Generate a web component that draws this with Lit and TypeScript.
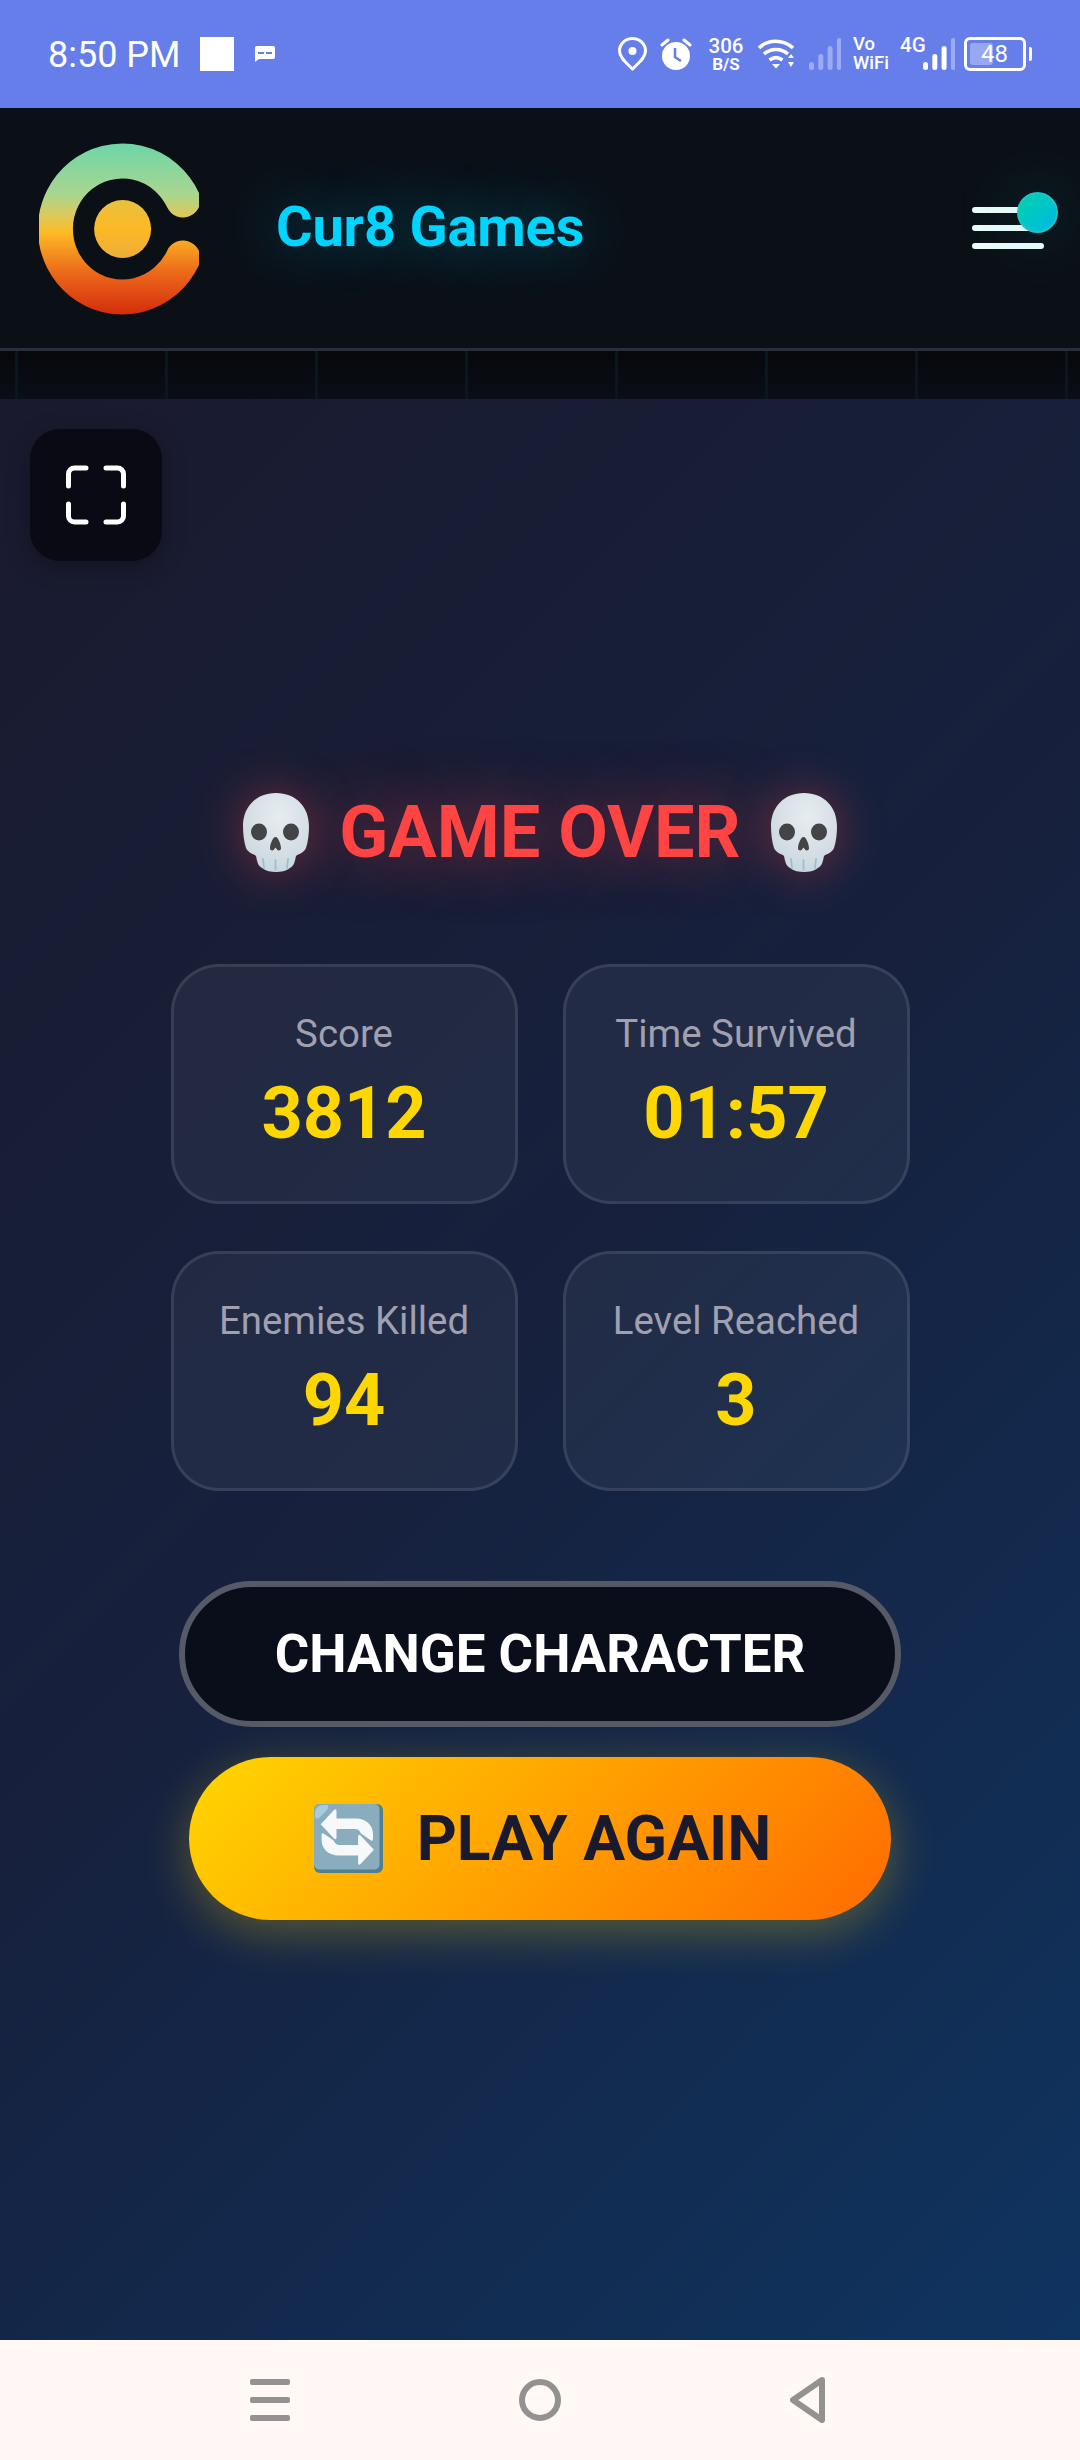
import { LitElement, html, css, svg } from 'lit';
import { customElement } from 'lit/decorators.js';

const skull = html`<svg class="skull" viewBox="0 0 66 79">
  <defs>
    <radialGradient id="sk" cx="0.55" cy="0.3" r="0.75">
      <stop offset="0" stop-color="#e6edf1" />
      <stop offset="1" stop-color="#c9d6dd" />
    </radialGradient>
  </defs>
  <path
    fill="url(#sk)"
    d="M33 0C13 0 0 14 0 33c0 8 1 16 3 22 2 5 8 6 10 8 1 5 2 10 6 12 4 3 9 4 14 4s10-1 14-4c4-2 5-7 6-12 2-2 8-3 10-8 2-6 3-14 3-22C66 14 53 0 33 0z"
  />
  <ellipse cx="16" cy="39" rx="8" ry="8.500" fill="#444" />
  <ellipse cx="48" cy="39" rx="8" ry="8.500" fill="#444" />
  <path fill="#444" d="M32.500 44c-3 0-5.500 8-5.500 11 0 3 3 3 4 1.500l1.500-2 1.500 2c1 1.500 4 1.500 4-1.500 0-3-2.500-11-5.500-11z" />
  <path stroke="#90c4dc" stroke-width="1.800" fill="none" stroke-linecap="round" d="M20 66l1 9M32.500 67v10M45 66l-1 9" />
</svg>`;

@customElement('app-root')
export class AppRoot extends LitElement {
  static styles = css`
    :host {
      display: flex;
      flex-direction: column;
      width: 1080px;
      height: 2460px;
      font-family: Roboto, 'Noto Sans', sans-serif;
      overflow: hidden;
    }

    /* android status bar */
    .status {
      flex: 0 0 108px;
      background: #667eea;
      color: #fff;
      display: flex;
      align-items: center;
      padding: 0 48px 0 48px;
      box-sizing: border-box;
    }
    .time {
      font-size: 36px;
      line-height: 1;
      margin-right: 19px;
      margin-top: 1px;
    }
    .square {
      width: 34px;
      height: 34px;
      background: #fff;
      margin-right: 21px;
    }
    .right {
      margin-left: auto;
      display: flex;
      align-items: center;
    }
    .right svg {
      display: block;
    }
    .speed {
      display: flex;
      flex-direction: column;
      align-items: center;
      font-weight: 500;
      width: 32px;
      margin: 0 16px 0 18px;
    }
    .speed b {
      font-weight: 500;
      font-size: 20.5px;
      line-height: 20px;
    }
    .speed small {
      font-size: 17px;
      line-height: 17px;
      font-weight: 700;
    }
    .vo {
      display: flex;
      flex-direction: column;
      font-weight: 500;
      margin: 0 12px;
      width: 35px;
      font-size: 18.5px;
      line-height: 19.5px;
    }
    .fourg {
      font-size: 20.5px;
      font-weight: 500;
      line-height: 20px;
      transform: translateY(-9px);
      width: 23px;
    }
    .battery {
      position: relative;
      width: 62px;
      height: 34px;
      border: 3px solid #fff;
      border-radius: 6px;
      box-sizing: border-box;
      margin-left: 9px;
      display: flex;
      align-items: center;
      justify-content: flex-end;
      padding-right: 15px;
      font-size: 24px;
    }
    .battery::before {
      content: '';
      position: absolute;
      left: 3px;
      top: 3px;
      bottom: 3px;
      width: 23px;
      background: rgba(255, 255, 255, 0.32);
      border-radius: 3px;
    }
    .battery span {
      position: relative;
    }
    .nub {
      width: 3px;
      height: 14px;
      background: #fff;
      border-radius: 0 2px 2px 0;
      margin-left: 3px;
    }

    /* site header */
    .header {
      flex: 0 0 240px;
      box-sizing: border-box;
      background: #0b1017;
      display: flex;
      align-items: center;
      padding-left: 39px;
      position: relative;
    }
    .logo {
      width: 160px;
      height: 172px;
      margin-top: 2px;
      flex: none;
    }
    .brand {
      margin-left: 77px;
      margin-top: -2px;
      font-size: 56px;
      font-weight: 700;
      color: #00d4ff;
      letter-spacing: -0.2px;
      text-shadow: 0 0 60px rgba(0, 212, 255, 0.45);
    }
    .burger {
      position: absolute;
      left: 972px;
      top: 99px;
      width: 72px;
      display: flex;
      flex-direction: column;
      gap: 12px;
    }
    .burger i {
      display: block;
      height: 6px;
      border-radius: 3px;
      background: #eafcfb;
    }
    .dot {
      position: absolute;
      left: 1017px;
      top: 84px;
      width: 41px;
      height: 41px;
      box-sizing: border-box;
      border-radius: 50%;
      border: 2px solid #22c3c8;
      background: linear-gradient(135deg, #00d4aa, #00b8e6);
      box-shadow: 0 0 60px 12px rgba(0, 212, 170, 0.1);
    }
    .rule {
      flex: 0 0 3px;
      background: #2a2e38;
    }
    .strip {
      flex: 0 0 48px;
      background-color: #080b11;
      background-image: linear-gradient(90deg, #0b161e 3px, transparent 3px), linear-gradient(#06080c, #0a0e16);
      background-size: 150px 100%, 100% 100%;
      background-position: 15px 0, 0 0;
    }

    /* game over screen */
    .main {
      flex: 1;
      background: linear-gradient(135deg, #1a1a2e 0%, #16213e 50%, #0f3460 100%);
      display: flex;
      flex-direction: column;
      align-items: center;
      padding-top: 393px;
      box-sizing: border-box;
      position: relative;
    }
    .fs {
      position: absolute;
      left: 30px;
      top: 30px;
      width: 132px;
      height: 132px;
      border-radius: 30px;
      background: #0a0a14;
      box-shadow: 0 6px 24px rgba(0, 0, 0, 0.3);
      display: flex;
      align-items: center;
      justify-content: center;
    }
    .title {
      display: flex;
      align-items: center;
      gap: 30px;
      height: 80px;
      font-size: 72px;
      font-weight: 700;
      color: #ff4444;
      white-space: nowrap;
    }
    .title span {
      text-shadow: 0 0 60px rgba(255, 68, 68, 0.5);
    }
    .skull {
      width: 66px;
      height: 79px;
      filter: drop-shadow(0 0 24px rgba(255, 68, 68, 0.4));
    }
    .stats {
      display: grid;
      grid-template-columns: 347px 347px;
      gap: 47px 45px;
      margin-top: 92px;
    }
    .card {
      height: 240px;
      box-sizing: border-box;
      border: 3px solid rgba(255, 255, 255, 0.1);
      border-radius: 48px;
      background: rgba(255, 255, 255, 0.05);
      display: flex;
      flex-direction: column;
      align-items: center;
      padding-top: 44px;
    }
    .label {
      font-size: 38.4px;
      line-height: 46px;
      color: #a0a0b0;
    }
    .value {
      font-size: 72px;
      line-height: 84px;
      font-weight: 700;
      color: #ffd700;
      margin-top: 15px;
    }
    .btn-change {
      width: 722px;
      height: 146px;
      box-sizing: border-box;
      margin-top: 90px;
      border: 6px solid #555a66;
      border-radius: 73px;
      background: #090e1a;
      color: #fff;
      font-size: 52.8px;
      font-weight: 700;
      display: flex;
      align-items: center;
      justify-content: center;
    }
    .btn-play {
      width: 702px;
      height: 163px;
      box-sizing: border-box;
      padding-left: 5px;
      margin-top: 30px;
      border-radius: 82px;
      background: linear-gradient(135deg, #ffd700, #ff6b00);
      box-shadow: 0 12px 48px rgba(255, 215, 0, 0.3);
      color: #1a1a2e;
      font-size: 62.4px;
      font-weight: 700;
      display: flex;
      align-items: center;
      justify-content: center;
      gap: 34px;
    }

    /* android nav bar */
    .nav {
      flex: 0 0 120px;
      background: #fff8f4;
      display: flex;
      align-items: center;
      padding-left: 250px;
      box-sizing: border-box;
    }
    .nav svg {
      display: block;
    }
  `;

  private renderStats() {
    const stats = [
      ['Score', '3812'],
      ['Time Survived', '01:57'],
      ['Enemies Killed', '94'],
      ['Level Reached', '3'],
    ];
    return stats.map(
      ([label, value]) => html`<div class="card">
        <div class="label">${label}</div>
        <div class="value">${value}</div>
      </div>`
    );
  }

  private bars(active: number) {
    const out = [];
    for (let i = 0; i < 4; i++) {
      const h = 8 + i * 8;
      out.push(
        svg`<rect x=${i * 9.3} y=${32 - h} width="5" height=${h} rx="2.5" fill="#fff" opacity=${i < active ? 1 : 0.35} />`
      );
    }
    return out;
  }

  render() {
    return html`
      <div class="status">
        <span class="time">8:50 PM</span>
        <div class="square"></div>
        <svg width="20" height="16" viewBox="0 0 20 16">
          <path fill="#fff" d="M2 0h16a2 2 0 0 1 2 2v9a2 2 0 0 1-2 2H4l-4 3V2a2 2 0 0 1 2-2z" />
          <path fill="#667eea" d="M3 6h6v2H3zM11 6h6v2h-6z" />
        </svg>
        <div class="right">
          <svg width="29" height="34" viewBox="0 0 29 34">
            <path
              fill="none"
              stroke="#fff"
              stroke-width="3"
              stroke-linejoin="round"
              d="M14.5 32C9 26.500 1.500 21 1.500 14a13 12.500 0 0 1 26 0c0 7-7.500 12.500-13 18z"
            />
            <circle cx="14.500" cy="14" r="4" fill="#fff" />
          </svg>
          <svg width="32" height="32" viewBox="0 0 32 32" style="margin-left:13px">
            <circle cx="16" cy="18" r="14" fill="#fff" />
            <path d="M15 10v9l6 4" fill="none" stroke="#667eea" stroke-width="2.500" />
            <path d="M2 7l6-5M30 7l-6-5" stroke="#fff" stroke-width="3" stroke-linecap="round" />
          </svg>
          <div class="speed"><b>306</b><small>B/S</small></div>
          <svg width="37" height="30" viewBox="0 0 37 30">
            <g fill="none" stroke="#fff" stroke-width="3.600">
              <path d="M1 9c9-9 24-9 34 0" />
              <path d="M6 15c7-6 17-6 24 0" />
              <path d="M11.500 21c4-3 9-3 13 0" />
            </g>
            <path fill="#fff" d="M14 25h8l-4 4.500zM30 19l3-4 3 4zM30 23h6l-3 5z" />
          </svg>
          <svg width="32" height="32" viewBox="0 0 32 32" style="margin-left:14px">${this.bars(0)}</svg>
          <div class="vo"><span>Vo</span><span>WiFi</span></div>
          <div class="fourg">4G</div>
          <svg width="32" height="32" viewBox="0 0 32 32">${this.bars(3)}</svg>
          <div class="battery"><span>48</span></div>
          <div class="nub"></div>
        </div>
      </div>

      <div class="header">
        <svg class="logo" viewBox="0 0 160 172">
          <defs>
            <linearGradient id="lg" gradientUnits="userSpaceOnUse" x1="0" y1="0" x2="0" y2="172">
              <stop offset="0" stop-color="#6dd5a8" />
              <stop offset="0.3" stop-color="#a9d68f" />
              <stop offset="0.42" stop-color="#dcc95a" />
              <stop offset="0.52" stop-color="#fdbb25" />
              <stop offset="0.75" stop-color="#ec6a1a" />
              <stop offset="1" stop-color="#d42c0c" />
            </linearGradient>
            <linearGradient id="ld" x1="0" y1="0" x2="0" y2="1">
              <stop offset="0" stop-color="#e8c140" />
              <stop offset="0.5" stop-color="#fdb825" />
              <stop offset="1" stop-color="#edae3a" />
            </linearGradient>
          </defs>
          <path
            d="M144 57A67 68 0 1 0 144 115"
            fill="none"
            stroke="url(#lg)"
            stroke-width="35"
            stroke-linecap="round"
          />
          <ellipse cx="83.600" cy="86" rx="28.500" ry="29" fill="url(#ld)" />
        </svg>
        <div class="brand">Cur8 Games</div>
        <div class="burger"><i></i><i></i><i></i></div>
        <div class="dot"></div>
      </div>
      <div class="rule"></div>
      <div class="strip"></div>

      <div class="main">
        <div class="fs">
          <svg width="60" height="60" viewBox="0 0 60 60">
            <path
              fill="none"
              stroke="#fff"
              stroke-width="5"
              stroke-linecap="round"
              stroke-linejoin="round"
              d="M2.500 21V9a6 6 0 0 1 6-6H20M40 3h11.500a6 6 0 0 1 6 6v12M57.500 39v12a6 6 0 0 1-6 6H40M20 57H8.500a6 6 0 0 1-6-6V39"
            />
          </svg>
        </div>
        <div class="title">${skull}<span>GAME OVER</span>${skull}</div>
        <div class="stats">${this.renderStats()}</div>
        <div class="btn-change">CHANGE CHARACTER</div>
        <div class="btn-play">
          <svg width="69" height="69" viewBox="0 0 69 69">
            <rect width="69" height="69" rx="6" fill="#4f7f90" />
            <rect width="65.500" height="65.500" rx="5" fill="#89adbd" />
            <path d="M1 9a8 8 0 0 1 8-8h5q1 3-2 6l-7 7q-3 2-4-1z" fill="#a8ccdc" />
            <g fill="#f6f8f9">
              <path
                id="ra"
                d="M6.700 20.300L20 6q2.500-2 2.500 1.500V14.500H42C52 14.500 59 21 59 30v5q0 2.500-2 1.500L47 29.500C46 27 44 25 41 25H22.500v8q0 3.500-2.500 1.500z"
              />
              <use href="#ra" transform="rotate(180 33.300 33)" />
            </g>
          </svg>
          <span>PLAY AGAIN</span>
        </div>
      </div>

      <div class="nav">
        <svg width="40" height="42" viewBox="0 0 40 42">
          <rect y="0" width="40" height="6" rx="2" fill="#949290" />
          <rect y="18" width="40" height="6" rx="2" fill="#949290" />
          <rect y="36" width="40" height="6" rx="2" fill="#949290" />
        </svg>
        <svg width="42" height="42" viewBox="0 0 42 42" style="margin-left:229px">
          <circle cx="21" cy="21" r="18" fill="none" stroke="#949290" stroke-width="6" />
        </svg>
        <svg width="36" height="46" viewBox="0 0 36 46" style="margin-left:229px">
          <path d="M32 3L3 23l29 20z" fill="none" stroke="#949290" stroke-width="6" stroke-linejoin="round" />
        </svg>
      </div>
    `;
  }
}
